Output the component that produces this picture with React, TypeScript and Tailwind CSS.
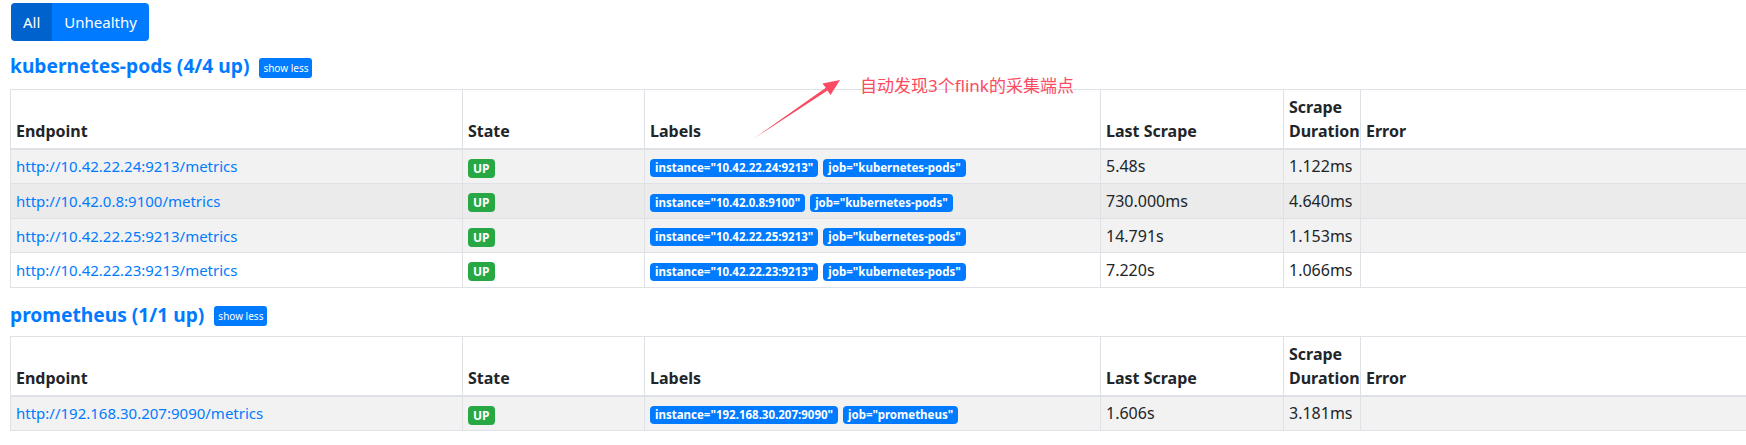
import React from "react";

const kubeRows = [
  { ep: "http://10.42.22.24:9213/metrics", inst: "10.42.22.24:9213", job: "kubernetes-pods", last: "5.48s", dur: "1.122ms", bg: "bg-[#f2f2f2]" },
  { ep: "http://10.42.0.8:9100/metrics", inst: "10.42.0.8:9100", job: "kubernetes-pods", last: "730.000ms", dur: "4.640ms", bg: "bg-[#ebebeb]" },
  { ep: "http://10.42.22.25:9213/metrics", inst: "10.42.22.25:9213", job: "kubernetes-pods", last: "14.791s", dur: "1.153ms", bg: "bg-[#f2f2f2]" },
  { ep: "http://10.42.22.23:9213/metrics", inst: "10.42.22.23:9213", job: "kubernetes-pods", last: "7.220s", dur: "1.066ms", bg: "bg-white" },
];

const promRows = [
  { ep: "http://192.168.30.207:9090/metrics", inst: "192.168.30.207:9090", job: "prometheus", last: "1.606s", dur: "3.181ms", bg: "bg-[#f2f2f2]" },
];

type Row = (typeof kubeRows)[number];

function Heading({ title }: { title: string }) {
  return (
    <div className="flex items-center h-[26px]">
      <h2 className="text-[19.2px] leading-[26px] font-bold text-[#007bff]">{title}</h2>
      <span className="ml-[10px] mt-[3px] bg-[#007bff] text-white text-[10px] leading-[14px] px-[4px] py-[3px] rounded-[3px]">show less</span>
    </div>
  );
}

function Badge({ children }: { children: React.ReactNode }) {
  return (
    <span className="inline-block bg-[#007bff] text-white text-[11.5px] leading-[16px] font-bold px-[5px] py-[1px] rounded-[4px] mr-[5px] align-middle">
      {children}
    </span>
  );
}

function Table({ rows }: { rows: Row[] }) {
  const th = "border border-[#dee2e6] border-b-2 px-[5px] py-[4.8px] text-left align-bottom font-bold leading-[24px]";
  const td = "border border-[#dee2e6] px-[5px] py-[4.8px] align-top leading-[24px]";
  return (
    <table className="table-fixed border-collapse w-[1760px] ml-[10px] text-[16px] text-[#212529]">
      <colgroup>
        <col className="w-[452px]" />
        <col className="w-[182px]" />
        <col className="w-[456px]" />
        <col className="w-[183px]" />
        <col className="w-[77px]" />
        <col />
      </colgroup>
      <thead>
        <tr>
          <th className={th}>Endpoint</th>
          <th className={th}>State</th>
          <th className={th}>Labels</th>
          <th className={th}>Last Scrape</th>
          <th className={th}>Scrape Duration</th>
          <th className={th}>Error</th>
        </tr>
      </thead>
      <tbody>
        {rows.map((r) => (
          <tr key={r.ep} className={r.bg}>
            <td className={td}>
              <span className="text-[#007bff] text-[15px]">{r.ep}</span>
            </td>
            <td className={td}>
              <span className="inline-block bg-[#28a745] text-white text-[12px] leading-[17px] font-bold px-[5px] py-[1px] rounded-[4px] align-middle">UP</span>
            </td>
            <td className={td}>
              <Badge>instance="{r.inst}"</Badge>
              <Badge>job="{r.job}"</Badge>
            </td>
            <td className={td}>{r.last}</td>
            <td className={td}>{r.dur}</td>
            <td className={td}></td>
          </tr>
        ))}
      </tbody>
    </table>
  );
}

export default function App() {
  return (
    <div
      className="relative w-[1746px] h-[445px] overflow-hidden bg-white"
      style={{ fontFamily: '"Noto Sans", "Noto Sans CJK SC", sans-serif' }}
    >
      <div className="pt-[3px] pl-[11px]">
        <div className="flex h-[38px] w-fit rounded-[4px] overflow-hidden text-[15px] text-white">
          <div className="bg-[#0062cc] px-[12px] flex items-center">All</div>
          <div className="bg-[#007bff] px-[12px] flex items-center">Unhealthy</div>
        </div>
      </div>
      <div className="pl-[10px] mt-[12px]">
        <Heading title="kubernetes-pods (4/4 up)" />
      </div>
      <div className="mt-[10px]">
        <Table rows={kubeRows} />
      </div>
      <div className="pl-[10px] mt-[14px]">
        <Heading title="prometheus (1/1 up)" />
      </div>
      <div className="mt-[8px]">
        <Table rows={promRows} />
      </div>

      <div className="absolute left-[860px] top-[75px] text-[17px] leading-[22px] text-[#fa4b62]">
        自动发现3个flink的采集端点
      </div>
      <svg className="absolute left-0 top-0 pointer-events-none" width="1746" height="445">
        <polygon
          points="753,139 827.5,90.5 830.5,95 840,80 822.5,83.5 825.8,87.8"
          fill="#fa4b62"
        />
      </svg>
    </div>
  );
}
